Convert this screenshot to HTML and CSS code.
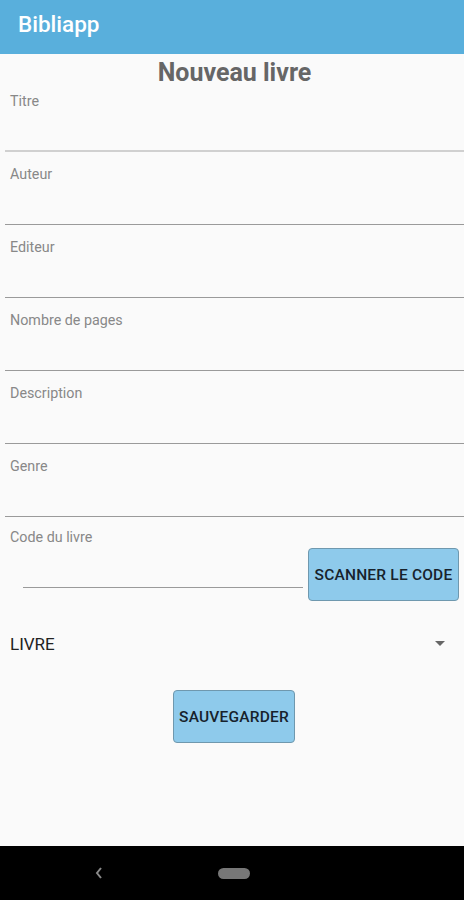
FILE: index.html
```html
<!DOCTYPE html>
<html lang="fr">
<head>
<meta charset="utf-8">
<title>Bibliapp</title>
<link rel="stylesheet" href="styles.css">
</head>
<body>
<div class="screen">
  <header class="appbar"><span class="appbar-title">Bibliapp</span></header>
  <main class="content">
    <h1 class="page-title">Nouveau livre</h1>
    <div class="field field-first"><label class="field-label">Titre</label></div>
    <div class="field"><label class="field-label">Auteur</label></div>
    <div class="field"><label class="field-label">Editeur</label></div>
    <div class="field"><label class="field-label">Nombre de pages</label></div>
    <div class="field"><label class="field-label">Description</label></div>
    <div class="field"><label class="field-label">Genre</label></div>
    <div class="code-block">
      <label class="field-label">Code du livre</label>
      <div class="code-row">
        <div class="code-input"></div>
        <button class="btn btn-scan">SCANNER LE CODE</button>
      </div>
    </div>
    <div class="select-row">
      <span class="select-value">LIVRE</span>
      <svg class="select-arrow" width="12" height="6" viewBox="0 0 12 6"><path d="M1 0 H11 L6 5 Z" fill="#666"/></svg>
    </div>
    <div class="save-row"><button class="btn btn-save">SAUVEGARDER</button></div>
  </main>
  <nav class="navbar">
    <svg class="nav-back" width="10" height="14" viewBox="0 0 10 14"><path d="M7 2 L3 7 L7 12" fill="none" stroke="#8a8a8a" stroke-width="2"/></svg>
    <span class="nav-home"></span>
  </nav>
</div>
</body>
</html>
```
FILE: styles.css
```css
* { box-sizing: border-box; }
html, body { margin: 0; padding: 0; }
body {
  font-family: Roboto, "Liberation Sans", Arial, sans-serif;
  background: #fafafa;
}
.screen {
  width: 464px;
  height: 900px;
  display: flex;
  flex-direction: column;
  background: #fafafa;
}
.appbar {
  height: 54px;
  background: #59afdc;
  display: flex;
  align-items: center;
  padding-left: 18px;
  padding-bottom: 6px;
  flex-shrink: 0;
}
.appbar-title {
  color: #fff;
  font-size: 22.5px;
  font-weight: 500;
}
.content {
  flex: 1;
  display: flex;
  flex-direction: column;
}
.page-title {
  margin: 4px 0 -9px;
  text-align: center;
  font-size: 25px;
  line-height: 30px;
  font-weight: 700;
  color: #666;
  padding-left: 5px;
}
.field {
  height: 73px;
  padding: 13px 0 0 5px;
  margin-left: 5px;
  border-bottom: 1px solid #9a9a9a;
}
.field-first {
  border-bottom: 2px solid #d0d0d0;
}
.field-label {
  display: block;
  font-size: 14.3px;
  line-height: 18px;
  color: #888;
}
.code-block {
  padding: 11px 0 0 10px;
}
.code-row {
  display: flex;
  align-items: flex-start;
  margin-top: 2px;
}
.code-input {
  width: 280px;
  margin-left: 13px;
  height: 40px;
  border-bottom: 1px solid #9a9a9a;
}
.btn {
  font-family: Roboto, "Liberation Sans", Arial, sans-serif;
  font-size: 15.5px;
  font-weight: 500;
  color: #17222c;
  background: #8ecaeb;
  border: 1px solid #6f98ae;
  border-radius: 4px;
  height: 53px;
  padding: 0;
  letter-spacing: 0.2px;
}
.btn-scan {
  width: 151px;
  margin-left: 5px;
}
.select-row {
  display: flex;
  align-items: center;
  justify-content: space-between;
  margin-top: 33px;
  padding: 0 18px 0 10px;
  height: 20px;
}
.select-value {
  font-size: 17px;
  color: #222;
}
.select-arrow { display: block; }
.save-row {
  display: flex;
  justify-content: center;
  margin-top: 36px;
  padding-left: 4px;
}
.btn-save {
  width: 122px;
}
.navbar {
  height: 54px;
  background: #000;
  flex-shrink: 0;
  display: flex;
  align-items: center;
  padding-left: 94px;
}
.nav-back { display: block; }
.nav-home {
  display: block;
  width: 32px;
  height: 11px;
  border-radius: 6px;
  background: #777;
  margin-left: 114px;
}
```
